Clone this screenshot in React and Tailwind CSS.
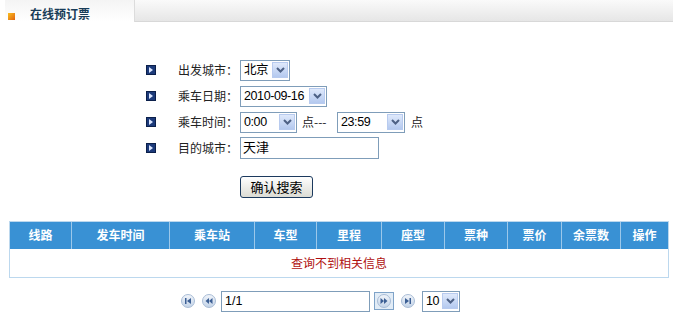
import React from 'react';

const font = { fontFamily: '"Noto Sans CJK SC", "Liberation Sans", sans-serif' };
const fieldFont = { fontFamily: '"Liberation Sans", "Noto Sans CJK SC", sans-serif' };

const Arrow = () => (
  <span className="w-[16px] h-[16px] shrink-0 bg-gradient-to-b from-[#dfe9fb] to-[#b4c9ef] border border-[#b8cbef] flex items-center justify-center">
    <svg width="9" height="6" viewBox="0 0 9 6">
      <path d="M1 1 L4.5 4.5 L8 1" stroke="#4d6185" strokeWidth="2" fill="none" />
    </svg>
  </span>
);

const Select = ({ value, width }) => (
  <div className={`h-[21px] border border-[#7f9db9] bg-white flex items-center justify-between pl-[3px] pr-[1px] ${width}`}>
    <span className="text-[12.5px] tracking-[-0.4px] text-black leading-none whitespace-nowrap" style={fieldFont}>{value}</span>
    <Arrow />
  </div>
);

const Bullet = () => (
  <span className="w-[10px] h-[10px] bg-[#1c3a7a] border border-[#0b1f4a] flex items-center justify-center">
    <svg width="6" height="6" viewBox="0 0 6 6"><path d="M1 0 L5 3 L1 6 Z" fill="#dbe6ff" /></svg>
  </span>
);

const Row = ({ label, children }) => (
  <div className="flex items-center h-[26px]">
    <div className="w-[32px] flex"><Bullet /></div>
    <div className="w-[62px] text-[12px] text-[#222]" style={font}>{label}</div>
    <div className="flex items-center">{children}</div>
  </div>
);

const PageBtn = ({ dir, boxed }) => (
  <span className={`flex items-center justify-center ${boxed ? 'w-[20px] h-[18px] border border-[#7fa3c8] bg-[#e2ecf6]' : 'w-[16px] h-[16px]'}`}>
    <span className="w-[14px] h-[14px] rounded-full bg-gradient-to-b from-[#f0f4fa] to-[#c4d4e8] border border-[#a8bcd6] flex items-center justify-center">
      <svg width="8" height="6" viewBox="0 0 8 6">
        {dir === 'first' && <><rect x="1" y="0" width="1.5" height="6" fill="#3c5f94" /><path d="M7 0 L3 3 L7 6 Z" fill="#3c5f94" /></>}
        {dir === 'prev' && <><path d="M4 0 L0.5 3 L4 6 Z" fill="#3c5f94" /><path d="M7.5 0 L4 3 L7.5 6 Z" fill="#3c5f94" /></>}
        {dir === 'next' && <><path d="M0.5 0 L4 3 L0.5 6 Z" fill="#3c5f94" /><path d="M4 0 L7.5 3 L4 6 Z" fill="#3c5f94" /></>}
        {dir === 'last' && <><path d="M1 0 L5 3 L1 6 Z" fill="#3c5f94" /><rect x="5.5" y="0" width="1.5" height="6" fill="#3c5f94" /></>}
      </svg>
    </span>
  </span>
);

const cols = [
  ['线路', 'w-[61px]'],
  ['发车时间', 'w-[98px]'],
  ['乘车站', 'w-[85px]'],
  ['车型', 'w-[62px]'],
  ['里程', 'w-[65px]'],
  ['座型', 'w-[63px]'],
  ['票种', 'w-[63px]'],
  ['票价', 'w-[54px]'],
  ['余票数', 'w-[59px]'],
  ['操作', 'flex-1'],
];

export default function App() {
  return (
    <div className="w-[673px] h-[316px] bg-white overflow-hidden" style={font}>
      {/* header */}
      <div className="flex h-[23px]">
        <div className="w-[5px] bg-white" />
        <div className="w-[130px] h-[22px] bg-gradient-to-b from-[#f4f4f4] to-white border-r border-[#dcdcdc] flex items-center">
          <span className="ml-[3px] mt-[10px] w-[7px] h-[7px] bg-gradient-to-br from-[#f8c020] to-[#e06010]" />
          <span className="ml-[15px] mt-[5px] text-[12px] font-bold text-[#183c58]">在线预订票</span>
        </div>
        <div className="flex-1 h-[22px] bg-gradient-to-b from-[#fafafa] to-[#e6e6e6] border-b border-[#d8d8d8]" />
      </div>

      {/* form */}
      <div className="ml-[146px] mt-[34px] flex flex-col">
        <Row label="出发城市：">
          <Select value="北京" width="w-[50px]" />
        </Row>
        <Row label="乘车日期：">
          <Select value="2010-09-16" width="w-[87px]" />
        </Row>
        <Row label="乘车时间：">
          <Select value="0:00" width="w-[57px]" />
          <span className="ml-[5px] w-[35px] text-[12px] text-[#222]">点---</span>
          <Select value="23:59" width="w-[68px]" />
          <span className="ml-[6px] text-[12px] text-[#222]">点</span>
        </Row>
        <Row label="目的城市：">
          <div className="w-[139px] h-[22px] border border-[#7f9db9] bg-white px-[2px] text-[13px] leading-[18px] text-black">天津</div>
        </Row>
        <div className="ml-[94px] mt-[12px]">
          <button className="w-[73px] h-[22px] rounded-[3px] border border-[#1c3a5e] bg-gradient-to-b from-white to-[#dcdcd4] text-[13px] text-black leading-none">确认搜索</button>
        </div>
      </div>

      {/* table */}
      <div className="mx-[9px] mt-[23px] w-[660px] border border-[#bcd8ee]">
        <div className="flex h-[27px] bg-[#3991d4]">
          {cols.map(([t, w], i) => (
            <div key={t} className={`${w} flex items-center justify-center text-[12px] font-bold text-white ${i > 0 ? 'border-l border-[#9cc8ea]' : ''}`}>{t}</div>
          ))}
        </div>
        <div className="h-[28px] flex items-center justify-center text-[12px] text-[#b01010]">查询不到相关信息</div>
      </div>

      {/* pager */}
      <div className="mt-[13px] ml-[180px] flex items-center">
        <PageBtn dir="first" />
        <span className="w-[5px]" />
        <PageBtn dir="prev" />
        <div className="ml-[4px] w-[149px] h-[21px] border border-[#7f9db9] px-[3px] text-[12.5px] leading-[19px]" style={fieldFont}>1/1</div>
        <span className="w-[4px]" />
        <PageBtn dir="next" boxed />
        <span className="w-[6px]" />
        <PageBtn dir="last" />
        <div className="ml-[6px]"><Select value="10" width="w-[38px]" /></div>
      </div>
    </div>
  );
}
